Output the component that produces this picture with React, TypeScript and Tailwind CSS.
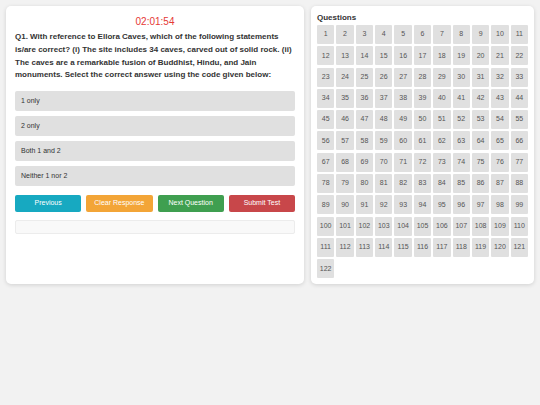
import React from 'react';

const options = ['1 only', '2 only', 'Both 1 and 2', 'Neither 1 nor 2'];
const questionNumbers = Array.from({ length: 122 }, (_, i) => i + 1);

export default function App() {
  return (
    <div className="min-h-screen bg-[#f2f2f2] font-['Liberation_Sans',Arial,sans-serif]">
      <div className="flex gap-[7px] p-[6px]">
        <div className="w-[298px] shrink-0 rounded-[5px] bg-white px-[9px] pt-[9px] shadow-[0_1px_4px_rgba(0,0,0,0.14)]">
          <div className="text-center text-[10px] leading-[14px] text-[#e53935]">02:01:54</div>
          <p className="mt-[2px] text-[8px] font-bold leading-[12.8px] text-[#333]">
            Q1. With reference to Ellora Caves, which of the following statements is/are correct? (i) The
            site includes 34 caves, carved out of solid rock. (ii) The caves are a remarkable fusion of
            Buddhist, Hindu, and Jain monuments. Select the correct answer using the code given below:
          </p>

          <div className="mt-[9px] flex flex-col gap-[5px]">
            {options.map((opt) => (
              <div
                key={opt}
                className="flex h-[20px] items-center rounded-[2px] bg-[#e0e0e0] px-[6px] text-[7px] text-[#333]"
              >
                {opt}
              </div>
            ))}
          </div>

          <div className="mt-[9px] grid grid-cols-4 gap-[5px]">
            <button className="h-[17px] rounded-[2px] bg-[#17a9c1] text-[7px] text-white">Previous</button>
            <button className="h-[17px] rounded-[2px] bg-[#f3a537] text-[7px] text-white">Clear Response</button>
            <button className="h-[17px] rounded-[2px] bg-[#3f9f50] text-[7px] text-white">Next Question</button>
            <button className="h-[17px] rounded-[2px] bg-[#c8474a] text-[7px] text-white">Submit Test</button>
          </div>

          <div className="mt-[8px] h-[14px] rounded-[2px] border border-[#ececec] bg-[#f9f9f9]" />
        </div>

        <div className="flex-1 rounded-[5px] bg-white px-[6px] pb-[6px] pt-[7px] shadow-[0_1px_4px_rgba(0,0,0,0.14)]">
          <h2 className="text-[8px] font-bold leading-[10px] text-[#333]">Questions</h2>
          <div className="mt-[2px] grid grid-cols-11 gap-x-[2px] gap-y-[2.3px]">
            {questionNumbers.map((n) => (
              <div
                key={n}
                className="flex h-[19px] items-center justify-center rounded-[1px] bg-[#e0e0e0] text-[7px] text-[#555]"
              >
                {n}
              </div>
            ))}
          </div>
        </div>
      </div>
    </div>
  );
}
